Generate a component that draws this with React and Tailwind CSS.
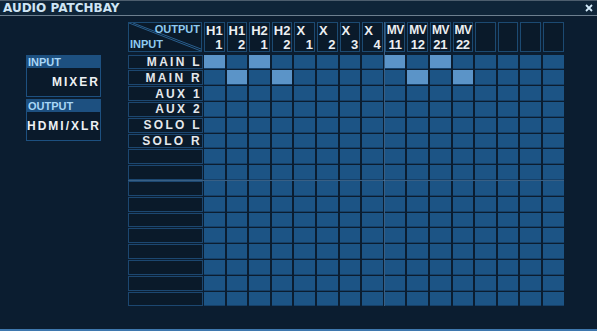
const COLS = [
  ["H1", "1"], ["H1", "2"], ["H2", "1"], ["H2", "2"],
  ["X", "1"], ["X", "2"], ["X", "3"], ["X", "4"],
  ["MV", "11"], ["MV", "12"], ["MV", "21"], ["MV", "22"],
  null, null, null, null,
];

const ROWS = ["MAIN L", "MAIN R", "AUX 1", "AUX 2", "SOLO L", "SOLO R", "", "", "", "", "", "", "", "", "", ""];

// row -> active column indexes
const ACTIVE = { 0: [0, 2, 8, 10], 1: [1, 3, 9, 11] };

function SideBox({ title, value, align }) {
  return (
    <div className="border border-[#1d5080] bg-[#0a1a2b]">
      <div className="h-[12px] bg-[#1d5080] text-[#a8d6f6] text-[11px] font-bold leading-[12px] pl-[1px]">{title}</div>
      <div
        className={`h-[28px] flex items-center text-[12px] font-bold tracking-[2px] text-[#eef1f4] ${
          align === "right" ? "justify-end pr-0" : "justify-start pl-0"
        }`}
      >
        {value}
      </div>
    </div>
  );
}

function HeaderCell({ col }) {
  return (
    <div className="w-[20.6px] h-[30px] border border-[#1c4a72] bg-[#0a1a2a] flex flex-col text-[#eceff2] font-bold leading-none">
      {col && (
        <>
          <span className={`${col[0] === "MV" ? "text-[12px] tracking-[-0.5px]" : "text-[13px]"} pl-[1px] pt-[1px]`}>{col[0]}</span>
          <span className={`text-[13px] mt-auto ${col[1].length > 1 ? "tracking-[-0.3px] text-center" : "text-right pr-[1px]"}`}>
            {col[1]}
          </span>
        </>
      )}
    </div>
  );
}

export default function App() {
  return (
    <div className="w-[597px] h-[331px] bg-[#0b1d30] flex flex-col overflow-hidden border-t border-[#4d5e6e] border-b-2 border-b-[#3f78ae] font-['Liberation_Sans',Arial,sans-serif]">
      {/* title bar */}
      <div className="h-[15px] shrink-0 bg-[#0f2539] border-b border-[#6d7f8f] flex items-center justify-between pl-[3px] pr-[3px]">
        <span className="text-[12px] font-bold text-[#cfe5f5] leading-none font-['DejaVu_Sans',sans-serif]">AUDIO PATCHBAY</span>
        <svg width="8" height="8" viewBox="0 0 8 8" className="mr-[1px]">
          <path d="M1 1L7 7M7 1L1 7" stroke="#d3ebfa" strokeWidth="1.8" />
        </svg>
      </div>

      <div className="flex flex-1 items-start">
        {/* input / output boxes */}
        <div className="ml-[26px] mt-[39px] w-[75px] flex flex-col gap-[2px]">
          <SideBox title="INPUT" value="MIXER" align="right" />
          <SideBox title="OUTPUT" value="HDMI/XLR" align="left" />
        </div>

        {/* matrix */}
        <div className="ml-[27px] mt-[6px] relative">
          <div className="flex gap-[2px]">
            <div className="relative w-[74px] h-[30px] border border-[#1c4a72] bg-[#0a1a2a]">
              <svg className="absolute inset-0" width="72" height="28" viewBox="0 0 72 28">
                <path d="M0 0L72 28" stroke="#2a5f8e" strokeWidth="1" />
                <path d="M4 0L72 26" stroke="#2a5f8e" strokeWidth="1" />
              </svg>
              <span className="absolute right-[1px] top-[1px] text-[11px] font-bold leading-none text-[#8fcaf0]">OUTPUT</span>
              <span className="absolute left-[1px] bottom-[1px] text-[11px] font-bold leading-none text-[#8fcaf0]">INPUT</span>
            </div>
            {COLS.map((c, i) => (
              <HeaderCell key={i} col={c} />
            ))}
          </div>

          <div className="mt-[2.7px] grid grid-cols-[74px_repeat(16,20.6px)] auto-rows-[14.8px] gap-x-[2px] gap-y-[1px]">
            {ROWS.map((label, r) => (
              <div key={r} className="contents">
                <div className="border border-[#1c4770] bg-[#0a1a2a] flex items-center justify-end text-[12px] font-bold tracking-[2.3px] text-[#e4e8ec] leading-none -mr-[1px]">
                  {label}
                </div>
                {COLS.map((_, c) => (
                  <div
                    key={c}
                    className={`border-b border-[#164068] ${
                      ACTIVE[r] && ACTIVE[r].includes(c) ? "bg-[#5b94c8]" : "bg-[#1c5485]"
                    }`}
                  />
                ))}
              </div>
            ))}
          </div>

          {/* group separators */}
          <div className="absolute left-[256px] top-0 bottom-0 w-px bg-[#4c7ca8]/70" />
          <div className="absolute left-0 right-0 top-[158px] h-px bg-[#4c7ca8]/70" />
        </div>
      </div>
    </div>
  );
}
